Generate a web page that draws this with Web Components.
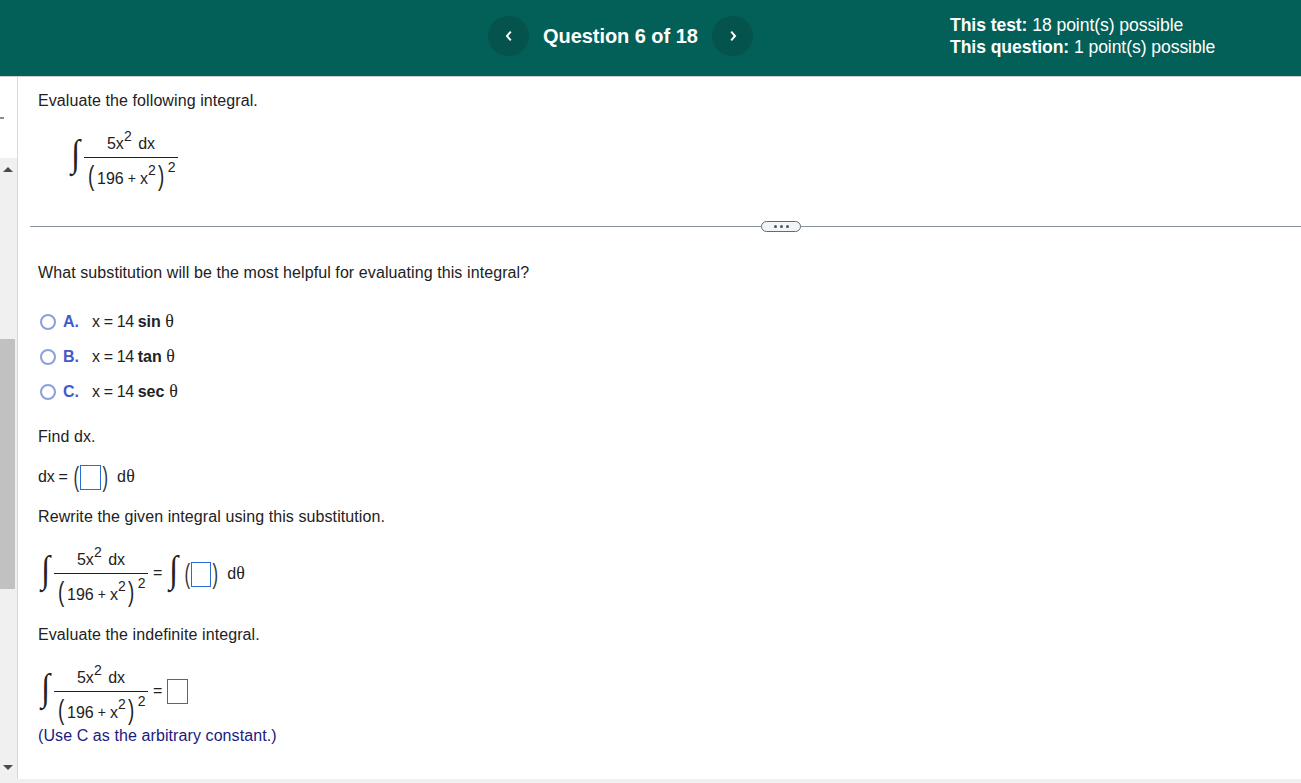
<!DOCTYPE html>
<html lang="en"><head><meta charset="utf-8"><title>Question 6 of 18</title>
<style>
html,body{margin:0;padding:0;height:783px;overflow:hidden;background:#fff;font-family:"Liberation Sans",Arial,sans-serif;color:#1a1a1a}
</style></head><body>
<test-page></test-page>
<script>
const def=(name,css,html)=>customElements.define(name,class extends HTMLElement{
  constructor(){super();const r=this.attachShadow({mode:'open'});r.innerHTML=`<style>${css}</style>${html}`;}
});
const B='#2a6cd0';
def('top-bar',`:host{display:flex;align-items:center;height:72px;padding-bottom:4px;background:#036058;color:#fff;border-bottom:1px solid #c9cfd0;box-sizing:content-box;padding-left:488px}
 .c{width:41px;height:40px;border-radius:50%;background:#05534d;display:flex;align-items:center;justify-content:center;flex:none}
 .q{font:bold 20px/24px "Liberation Sans",sans-serif;margin:0 14px;width:155px;white-space:nowrap;letter-spacing:-.05px}
 .i{margin-left:197px;font:17.6px/22px "Liberation Sans",sans-serif;white-space:nowrap;letter-spacing:-.08px}
 b{font-weight:bold}`,
 `<span class="c"><svg width="10" height="12" viewBox="0 0 10 12"><path d="M6.8 1.6 3 6l3.8 4.4" fill="none" stroke="#fff" stroke-width="2"/></svg></span>
  <span class="q">Question 6 of 18</span>
  <span class="c"><svg width="10" height="12" viewBox="0 0 10 12"><path d="M3.2 1.6 7 6l-3.8 4.4" fill="none" stroke="#fff" stroke-width="2"/></svg></span>
  <div class="i"><div><b>This test:</b> 18 point(s) possible</div><div><b>This question:</b> 1 point(s) possible</div></div>`);
def('side-bar',`:host{display:flex;flex-direction:column;width:18px;flex:none;height:702px;box-sizing:border-box;border-right:1px solid #d9d9d9}
 .t{height:40px}.d{width:4px;height:2px;background:#8c8c8c;margin-top:40px}
 .s{height:41px}
 .tr{flex:1;width:17px;background:#f0f0f0;display:flex;flex-direction:column;align-items:flex-start}
 .up{width:0;height:0;border:5px solid transparent;border-top:0;border-bottom:5px solid #4a4a4a;margin:9px 0 0 3px}
 .th{width:15px;height:250px;background:#c1c1c1;margin-top:167px}
 .dn{width:0;height:0;border:5px solid transparent;border-bottom:0;border-top:5px solid #4a4a4a;margin:176px 0 0 3px}`,
 `<div class="t"><div class="d"></div></div><div class="s"></div><div class="tr"><div class="up"></div><div class="th"></div><div class="dn"></div></div>`);
def('ans-box',`:host{display:inline-block;box-sizing:border-box;border:1px solid ${B};width:var(--w,21px);height:25px;background:#fff;flex:none}`,``);
def('paren-box',`:host{display:inline-flex;align-items:center;flex:none}
 .p{font:27px/25px "Liberation Sans",sans-serif;display:inline-block;transform:scaleX(.62);width:8px;text-align:center;color:#333;font-weight:normal}`,
 `<span class="p">(</span><ans-box></ans-box><span class="p">)</span>`);
def('int-sign',`:host{display:inline-block;width:10px;height:38px;flex:none;position:relative;overflow:visible}
 span{position:absolute;left:.5px;top:-3px;font:38px/40px "Liberation Serif",serif;color:#222;display:block;transform:scaleX(.85);transform-origin:left}`,`<span>∫</span>`);
def('int-frac',`:host{display:block;flex:none;width:94px;font:16px/18px "Liberation Sans",sans-serif;color:#222}
 .n{height:22px;border-bottom:1px solid #222;display:flex;align-items:flex-end;justify-content:center}
 .nn{margin-bottom:4px;white-space:nowrap}
 .nn sup{vertical-align:8px}
 .dx{margin-left:2px}
 .d{padding:9px 0 0 3px;white-space:nowrap;height:24px;line-height:18px}
 sup{font-size:14px;line-height:0;vertical-align:9px}
 .p{font:27px/0 "Liberation Sans",sans-serif;display:inline-block;transform:scaleX(.7);width:7px;text-align:center;position:relative;top:1px}
 .plus{font-size:14px;margin:0 4px;position:relative;top:-1px}
 .o{font-size:14px;line-height:0;vertical-align:12px;margin-left:4px}
 .dd{margin:0 1px 0 3px}`,
 `<div class="n"><span class="nn">5x<sup>2</sup> <span class="dx">dx</span></span></div>
  <div class="d"><span class="p">(</span><span class="dd">196<span class="plus">+</span>x<sup>2</sup></span><span class="p">)</span><span class="o">2</span></div>`);
def('q-text',`:host{display:block;font:16px/20px "Liberation Sans",sans-serif;color:#222;white-space:nowrap;letter-spacing:.09px}`,`<slot></slot>`);
def('q-option',`:host{display:flex;align-items:center;height:35px;font:16px/20px "Liberation Sans",sans-serif;color:#222;white-space:nowrap}
 .r{width:16px;height:16px;box-sizing:border-box;border:2px solid #8b9fdb;border-radius:50%;margin-left:2px;background:#fff;flex:none}
 .l{font-weight:bold;color:#3f5cc6;margin-left:7px;width:29px}`,
 `<span class="r"></span><span class="l"><slot name="l"></slot></span><span><slot></slot></span>`);
def('q-row',`:host{display:flex;align-items:center;white-space:pre;font:16px/20px "Liberation Sans",sans-serif;color:#222}`,`<slot></slot>`);
def('q-divider',`:host{display:flex;align-items:center;height:11px;margin-left:-8px;margin-right:-1px}
 i{flex:1;height:1px;background:#8b919c;display:block}
 .first{flex:none;width:731px}
 .p{width:40px;height:11px;box-sizing:border-box;border:1px solid #5f6b7c;border-radius:6px;background:#f3f5f8;display:flex;align-items:center;justify-content:center;gap:3px;flex:none}
 .p b{width:3px;height:3px;border-radius:50%;background:#4b5563;display:block}`,
 `<i class="first"></i><span class="p"><b></b><b></b><b></b></span><i></i>`);
def('test-page',`:host{display:flex;flex-direction:column;height:783px;background:#f0f0f0}
 .b{display:flex;height:702px;background:#fff;flex:none}
 main{flex:1;padding-left:20px;display:flex;flex-direction:column;min-width:0;overflow:hidden;font-family:"Liberation Sans",sans-serif}
 .f{display:flex;align-items:flex-start;height:56px}
 .th{font:19.5px/0 "Liberation Serif",serif;display:inline-block;transform:scaleX(.92)}
 .x{letter-spacing:-.4px}
 .eq{margin:12px 0 0 5px;font-size:16px;line-height:20px;color:#222}
 .sign{margin-top:1px;margin-right:4px}
 .k{font-size:16px;line-height:20px;color:#222;margin:13px 0 0 8px}
 .dxe{letter-spacing:-.25px}
 `,
 `<top-bar></top-bar><div class="b"><side-bar></side-bar><main>
   <q-text style="margin-top:14px">Evaluate the following integral.</q-text>
   <div class="f" style="margin-top:24px;margin-left:32px"><int-sign class="sign"></int-sign><int-frac></int-frac></div>
   <q-divider style="margin-top:30px"></q-divider>
   <q-text style="margin-top:31px">What substitution will be the most helpful for evaluating this integral?</q-text>
   <div style="margin-top:21px">
    <q-option><span slot="l">A.</span><span class="x">x = 14 </span><b>sin</b> <span class="th">θ</span></q-option>
    <q-option><span slot="l">B.</span><span class="x">x = 14 </span><b>tan</b> <span class="th">θ</span></q-option>
    <q-option><span slot="l">C.</span><span class="x">x = 14 </span><b>sec</b> <span class="th">θ</span></q-option>
   </div>
   <q-text style="margin-top:18px">Find dx.</q-text>
   <q-row style="margin-top:17px;height:26px"><span class="dxe">dx = </span><paren-box></paren-box><span style="margin-left:8px">d<span class="th">θ</span></span></q-row>
   <q-text style="margin-top:17px">Rewrite the given integral using this substitution.</q-text>
   <div class="f" style="margin-top:24px;margin-left:2px"><int-sign class="sign"></int-sign><int-frac></int-frac><span class="eq">=</span><int-sign class="sign" style="margin-left:6px"></int-sign><paren-box style="margin:11px 0 0 1px;--w:20px"></paren-box><span class="k">d<span class="th">θ</span></span></div>
   <q-text style="margin-top:18px">Evaluate the indefinite integral.</q-text>
   <div class="f" style="margin-top:24px;margin-left:2px"><int-sign class="sign"></int-sign><int-frac></int-frac><span class="eq">=</span><ans-box style="margin:10px 0 0 5px;--w:21px"></ans-box></div>
   <q-text style="margin-top:1px;color:#1a1a80">(Use C as the arbitrary constant.)</q-text>
 </main></div>`);
</script></body></html>
